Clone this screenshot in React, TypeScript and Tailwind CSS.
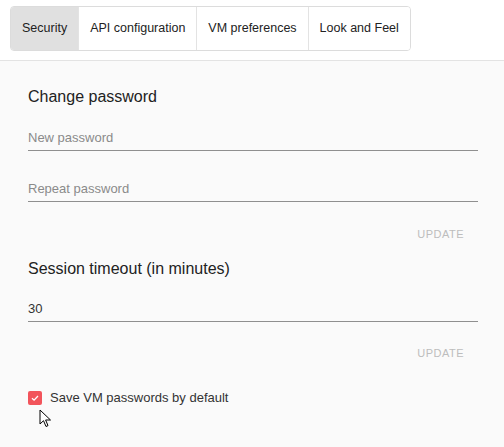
import React from 'react';

const tabs = ['Security', 'API configuration', 'VM preferences', 'Look and Feel'];

const Field: React.FC<{ label?: string; value?: string }> = ({ label, value }) => (
  <div className="border-b border-[#8f8f8f] pb-[4px] leading-[16px]">
    {value ? (
      <span className="text-[13px] text-[#333]">{value}</span>
    ) : (
      <span className="text-[13px] text-[#8a8a8a]">{label}</span>
    )}
  </div>
);

const App: React.FC = () => {
  return (
    <div className="relative w-[504px] h-[447px] bg-[#fafafa] font-['Liberation_Sans',Arial,sans-serif] overflow-hidden">
      {/* Tabs */}
      <div className="bg-white h-[61px] pt-[6px] pl-[10px] border-b border-[#e3e3e3]">
        <div className="inline-flex h-[45px] border border-[#dcdcdc] rounded-[4px] overflow-hidden">
          {tabs.map((t, i) => (
            <div
              key={t}
              className={
                'flex items-center px-[11px] text-[12.5px] text-[#222] ' +
                (i > 0 ? 'border-l border-[#e3e3e3] ' : '') +
                (i === 0 ? 'bg-[#e0e0e0]' : 'bg-white')
              }
            >
              {t}
            </div>
          ))}
        </div>
      </div>

      {/* Content */}
      <div className="pl-[28px] pr-[26px] pt-[26px]">
        <h2 className="text-[16px] text-[#222] leading-[20px]">Change password</h2>
        <div className="mt-[22px]">
          <Field label="New password" />
        </div>
        <div className="mt-[29px]">
          <Field label="Repeat password" />
        </div>
        <div className="flex justify-end mt-[25px] pr-[14px] leading-[14px]">
          <span className="text-[11px] text-[#bdbdbd] tracking-[0.5px]">UPDATE</span>
        </div>

        <h2 className="text-[16px] text-[#222] leading-[20px] mt-[18px]">Session timeout (in minutes)</h2>
        <div className="mt-[21px]">
          <Field value="30" />
        </div>
        <div className="flex justify-end mt-[24px] pr-[14px] leading-[14px]">
          <span className="text-[11px] text-[#bdbdbd] tracking-[0.5px]">UPDATE</span>
        </div>

        <div className="flex items-center gap-[8px] mt-[30px] leading-[16px]">
          <div className="w-[14px] h-[14px] rounded-[2px] bg-[#f2545b] flex items-center justify-center">
            <svg width="10" height="10" viewBox="0 0 10 10">
              <path d="M2 5.2 L4.1 7.2 L8 3" fill="none" stroke="white" strokeWidth="1.3" />
            </svg>
          </div>
          <span className="text-[13px] text-[#333]">Save VM passwords by default</span>
        </div>
      </div>

      {/* mouse cursor */}
      <svg className="absolute left-[39px] top-[409px]" width="14" height="20" viewBox="0 0 14 20">
        <path d="M1 1 L1 15 L4.5 11.7 L7 17.5 L9 16.6 L6.6 11 L11.5 11 Z" fill="white" stroke="black" strokeWidth="1" strokeLinejoin="round" />
      </svg>
    </div>
  );
};

export default App;
